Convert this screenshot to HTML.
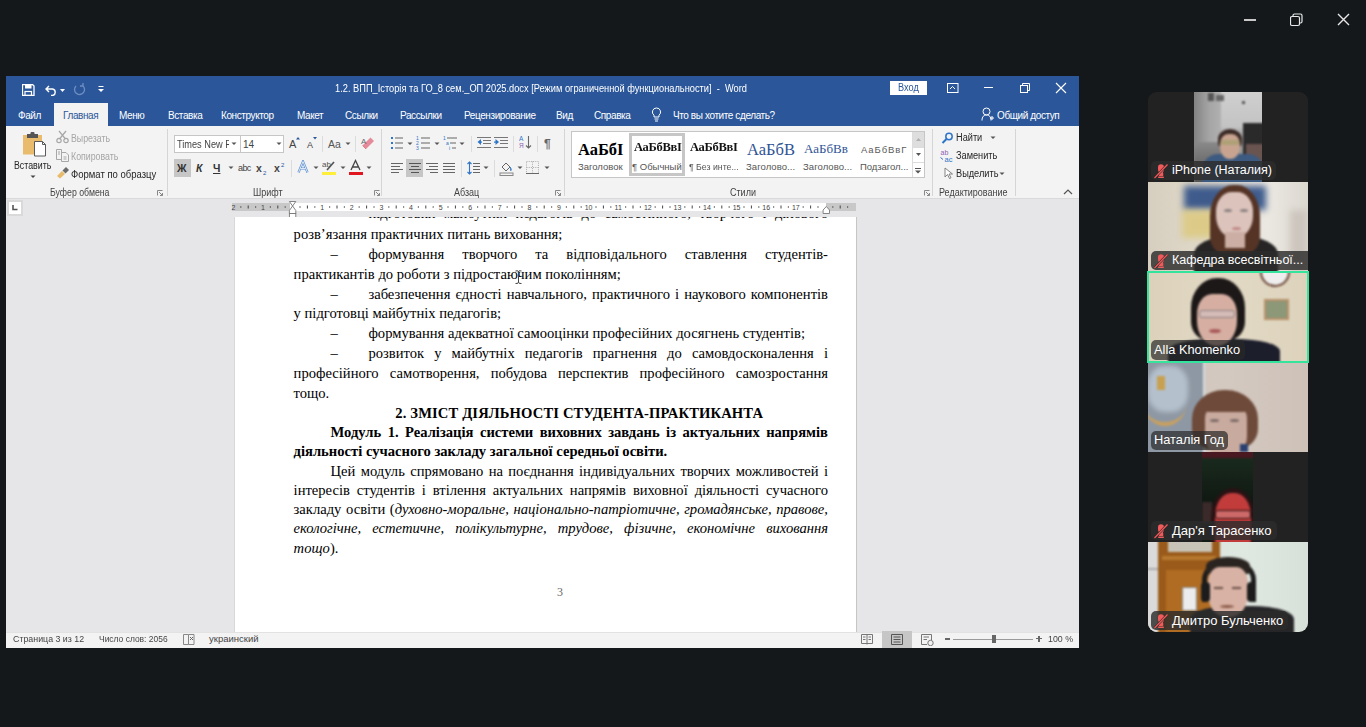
<!DOCTYPE html>
<html><head><meta charset="utf-8">
<style>
*{margin:0;padding:0;box-sizing:border-box}
html,body{width:1366px;height:727px;overflow:hidden;background:#15181b;font-family:"Liberation Sans",sans-serif;position:relative}
.a{position:absolute}
.t{position:absolute;white-space:pre;line-height:1}
.tab{position:absolute;top:111px;font-size:10px;color:#fff;white-space:pre;line-height:1;letter-spacing:-.4px}

.rl{position:absolute;font-size:9.5px;color:#262626;white-space:pre;line-height:1}
.gl{position:absolute;font-size:10px;color:#444;white-space:pre;line-height:1}
.sep{position:absolute;width:1px;background:#d5d5d5}
.ln{position:absolute;left:293.6px;width:534.4px;font-family:"Liberation Serif",serif;font-size:14.6px;line-height:19.6px;height:19.6px;color:#000;white-space:nowrap}
.j{text-align:justify;text-align-last:justify;white-space:normal}
.tile{position:absolute;left:1148px;width:160px;height:90px;background:#232323;overflow:hidden}
.lab{position:absolute;left:3px;bottom:2px;height:19px;background:rgba(28,28,28,.72);border-radius:4px;color:#fff;font-size:12.5px;line-height:19px;padding:0 4px 0 22px;white-space:pre}
.lab.nomic{padding-left:4px}
</style></head><body>
<!-- zoom window controls -->
<svg class="a" style="left:1244px;top:15px" width="14" height="10"><rect x="0" y="4" width="12" height="2" fill="#c8c8c8"/></svg>
<svg class="a" style="left:1290px;top:13px" width="14" height="14"><rect x="0.5" y="3.5" width="9" height="9" rx="1.5" fill="none" stroke="#e8e8e8" stroke-width="1.2"/><path d="M3 3.2V2.5a1.5 1.5 0 0 1 1.5-1.5H10.5A1.5 1.5 0 0 1 12 2.5V8.5A1.5 1.5 0 0 1 10.5 10H10" fill="none" stroke="#e8e8e8" stroke-width="1.2"/></svg>
<svg class="a" style="left:1337px;top:13px" width="14" height="14"><path d="M1 1L12 12M12 1L1 12" stroke="#e8e8e8" stroke-width="1.4"/></svg>

<!-- WORD TITLE -->
<div class="a" style="left:6px;top:76px;width:1073px;height:572px;background:#e6e6e9"></div>
<div class="a" style="left:6px;top:76px;width:1073px;height:50px;background:#2b579a"></div>
<svg class="a" style="left:22px;top:84px" width="13" height="12"><path d="M0.5 0.5H10.5L12 2V11.5H0.5Z" fill="none" stroke="#fff" stroke-width="1.3"/><rect x="3" y="1" width="6.5" height="3.5" fill="#fff"/><rect x="3" y="7.5" width="6.5" height="4" fill="none" stroke="#fff" stroke-width="1.2"/></svg>
<svg class="a" style="left:45px;top:84px" width="28" height="12"><path d="M4 2L1 5L4 8M1.3 5H7.5a3.3 3.3 0 0 1 0 6.5H6" fill="none" stroke="#fff" stroke-width="1.4"/><path d="M15 5H20L17.5 8Z" fill="#fff"/></svg>
<svg class="a" style="left:73px;top:83px" width="13" height="13"><path d="M9.5 2.5A5 5 0 1 1 3 3M10 0V3H7" fill="none" stroke="#6f8fc2" stroke-width="1.3"/></svg>
<svg class="a" style="left:98px;top:86px" width="7" height="8"><rect x="0.5" y="0" width="5" height="1" fill="#fff"/><path d="M0 3H6L3 6Z" fill="#fff"/></svg>
<div class="t" style="left:335px;top:84px;font-size:10px;color:#fff;transform:scaleX(.927);transform-origin:0 0">1.2. ВПП_Історія та ГО_8 сем._ОП 2025.docx [Режим ограниченной функциональности]  -  Word</div>
<div class="a" style="left:890px;top:81px;width:37px;height:14px;background:#fff"></div>
<div class="t" style="left:898px;top:83px;font-size:10px;color:#2b579a;transform:scaleX(.92);transform-origin:0 0">Вход</div>
<svg class="a" style="left:947px;top:83px" width="12" height="11"><rect x="0.5" y="0.5" width="10.5" height="9" fill="none" stroke="#fff"/><path d="M3 6L5.5 3.5L8 6" fill="none" stroke="#fff"/></svg>
<svg class="a" style="left:984px;top:87px" width="10" height="2"><rect x="0" y="0" width="9" height="1" fill="#fff"/></svg>
<svg class="a" style="left:1020px;top:83px" width="11" height="11"><rect x="0.5" y="2.5" width="7" height="7" fill="none" stroke="#fff"/><path d="M2.5 2.5V0.5H9.5V7.5H7.5" fill="none" stroke="#fff"/></svg>
<svg class="a" style="left:1055px;top:82px" width="13" height="13"><path d="M1 1L11 11M11 1L1 11" stroke="#fff" stroke-width="1.1"/></svg>
<!-- tabs -->
<div class="a" style="left:54px;top:103px;width:54px;height:23px;background:#f3f3f3"></div>
<div class="tab" style="left:18px">Файл</div>
<div class="tab" style="left:63px;color:#2b579a">Главная</div>
<div class="tab" style="left:119px">Меню</div>
<div class="tab" style="left:168px">Вставка</div>
<div class="tab" style="left:221px">Конструктор</div>
<div class="tab" style="left:297px">Макет</div>
<div class="tab" style="left:345px">Ссылки</div>
<div class="tab" style="left:400px">Рассылки</div>
<div class="tab" style="left:464px">Рецензирование</div>
<div class="tab" style="left:556px">Вид</div>
<div class="tab" style="left:594px">Справка</div>
<svg class="a" style="left:651px;top:107px" width="11" height="15"><path d="M5.5 1a4 4 0 0 0-2.5 7.2V10h5V8.2A4 4 0 0 0 5.5 1Z" fill="none" stroke="#fff"/><path d="M3.5 12H7.5M4 14H7" stroke="#fff"/></svg>
<div class="tab" style="left:673px">Что вы хотите сделать?</div>
<svg class="a" style="left:981px;top:107px" width="13" height="14"><circle cx="5.5" cy="4.5" r="3.5" fill="none" stroke="#fff"/><path d="M1 13.5C1 9.5 3 8 5.5 8S10 9.5 10 13.5" fill="none" stroke="#fff"/><path d="M9 11H13M11 9V13" stroke="#fff"/></svg>
<div class="tab" style="left:997px">Общий доступ</div>
<!-- RIBBON -->
<div class="a" style="left:6px;top:126px;width:1073px;height:73px;background:#f3f3f3;border-bottom:1px solid #d9d9d9"></div>
<!-- clipboard -->
<svg class="a" style="left:22px;top:131px" width="25" height="26">
 <rect x="1" y="4" width="19" height="19.5" fill="#e9bb6c"/>
 <rect x="5" y="3" width="11" height="4" fill="#555"/><rect x="8.5" y="1" width="4" height="3" rx="1" fill="#555"/>
 <path d="M12.5 10.5H20.5L23.5 13.5V25H12.5Z" fill="#fff" stroke="#5a5a5a" stroke-width="1"/>
 <path d="M20.5 10.5V13.5H23.5" fill="none" stroke="#5a5a5a" stroke-width="1"/>
</svg>
<div class="rl" style="left:14px;top:161px;font-size:10px;transform:scaleX(.88);transform-origin:0 0">Вставить</div>
<svg class="a" style="left:30px;top:175px" width="6" height="4"><path d="M0.5 0.5H5.5L3 3Z" fill="#444"/></svg>
<svg class="a" style="left:56px;top:130px" width="13" height="14"><path d="M3 1L9.5 9M10 1L3.5 9" stroke="#a6a6a6" stroke-width="1.2"/><circle cx="3" cy="10.5" r="2.2" fill="none" stroke="#a6a6a6" stroke-width="1.2"/><circle cx="10" cy="10.5" r="2.2" fill="none" stroke="#a6a6a6" stroke-width="1.2"/></svg>
<div class="rl" style="left:71px;top:134px;font-size:10px;color:#a6a6a6;transform:scaleX(.88);transform-origin:0 0">Вырезать</div>
<svg class="a" style="left:56px;top:149px" width="13" height="13"><path d="M0.5 0.5H5.5V10.5H0.5Z" fill="none" stroke="#a6a6a6"/><path d="M5.5 3.5H10L12.5 6V12.5H5.5Z" fill="#f3f3f3" stroke="#a6a6a6"/><path d="M2 3H4M2 5H4M7.5 8H10.5M7.5 10H10.5" stroke="#a6a6a6"/></svg>
<div class="rl" style="left:71px;top:152px;font-size:10px;color:#a6a6a6;transform:scaleX(.88);transform-origin:0 0">Копировать</div>
<svg class="a" style="left:56px;top:167px" width="14" height="12"><path d="M1 9L6 4L9 7L4 11.5Z" fill="#e9bb6c"/><path d="M6.5 3.5L9.5 6.5L13 3L10 0Z" fill="#6a6a6a"/></svg>
<div class="rl" style="left:71px;top:170px;font-size:10px;color:#262626;transform:scaleX(.95);transform-origin:0 0">Формат по образцу</div>
<div class="gl" style="left:50px;top:188px;transform:scaleX(.875);transform-origin:0 0">Буфер обмена</div>
<svg class="a" style="left:157px;top:190px" width="6" height="6"><path d="M0.5 0.5H5.5M0.5 0.5V5.5" stroke="#888" fill="none"/><path d="M2 2L5.5 5.5M5.5 3V5.5H3" stroke="#888" fill="none"/></svg>
<div class="sep" style="left:167px;top:129px;height:67px"></div>

<!-- font group -->
<div class="a" style="left:174px;top:135px;width:67px;height:18px;background:#fff;border:1px solid #c6c6c6"></div>
<div class="a" style="left:240px;top:135px;width:44px;height:18px;background:#fff;border:1px solid #c6c6c6"></div>
<div class="rl" style="left:177px;top:140px;font-size:10px;color:#444;width:58px;overflow:hidden;transform:scaleX(.92);transform-origin:0 0">Times New R</div>
<div class="a" style="left:229px;top:136px;width:10px;height:16px;background:#fff"></div>
<svg class="a" style="left:231px;top:142px" width="6" height="4"><path d="M0.5 0.5H5.5L3 3Z" fill="#555"/></svg>
<div class="rl" style="left:243px;top:140px;font-size:10px;color:#444">14</div>
<svg class="a" style="left:276px;top:142px" width="6" height="4"><path d="M0.5 0.5H5.5L3 3Z" fill="#555"/></svg>
<div class="rl" style="left:289px;top:139px;font-size:11px;color:#444">A</div>
<svg class="a" style="left:296px;top:137px" width="4" height="3"><path d="M0 2.5L2 0L4 2.5Z" fill="#2b579a"/></svg>
<div class="rl" style="left:307px;top:141px;font-size:9px;color:#444">A</div>
<svg class="a" style="left:313px;top:137px" width="4" height="3"><path d="M0 0L4 0L2 2.5Z" fill="#2b579a"/></svg>
<div class="sep" style="left:322px;top:136px;height:16px;background:#dcdcdc"></div>
<div class="rl" style="left:328px;top:139px;font-size:10.5px;color:#555">Aa</div>
<svg class="a" style="left:345px;top:142px" width="6" height="4"><path d="M0.5 0.5H5.5L3 3Z" fill="#555"/></svg>
<div class="sep" style="left:355px;top:136px;height:16px;background:#dcdcdc"></div>
<svg class="a" style="left:360px;top:136px" width="16" height="14"><path d="M6 13L14 5L10.5 1.5L2.5 9.5Z" fill="#e68a99"/><path d="M2.5 9.5L6 13" stroke="#c44" stroke-width=".5"/><text x="1" y="8" font-size="8" fill="#666" font-family="Liberation Sans">A</text></svg>
<!-- row2 -->
<div class="a" style="left:174px;top:159px;width:17px;height:18px;background:#c6c6c6"></div>
<div class="rl" style="left:177px;top:163px;font-size:10.5px;font-weight:bold;color:#333">Ж</div>
<div class="rl" style="left:196px;top:163px;font-size:10.5px;font-weight:bold;font-style:italic;color:#333">К</div>
<div class="rl" style="left:213px;top:163px;font-size:10.5px;font-weight:bold;color:#333;text-decoration:underline">Ч</div>
<svg class="a" style="left:228px;top:166px" width="6" height="4"><path d="M0.5 0.5H5.5L3 3Z" fill="#555"/></svg>
<div class="rl" style="left:238px;top:164px;font-size:9px;color:#444;letter-spacing:-.6px">abc</div>
<div class="rl" style="left:256px;top:163px;font-size:10.5px;font-weight:bold;color:#444">x</div>
<div class="rl" style="left:263px;top:170px;font-size:6px;color:#2b579a">2</div>
<div class="rl" style="left:274px;top:163px;font-size:10.5px;font-weight:bold;color:#444">x</div>
<div class="rl" style="left:281px;top:162px;font-size:6px;color:#2b579a">2</div>
<div class="sep" style="left:291px;top:160px;height:17px;background:#dcdcdc"></div>
<svg class="a" style="left:297px;top:160px" width="12" height="14"><path d="M1.5 12.5L6 1.5L10.5 12.5M3.5 8.5H8.5" fill="none" stroke="#5b8fd0" stroke-width="2.2"/><path d="M1.5 12.5L6 1.5L10.5 12.5M3.5 8.5H8.5" fill="none" stroke="#fff" stroke-width=".8"/></svg>
<svg class="a" style="left:313px;top:166px" width="6" height="4"><path d="M0.5 0.5H5.5L3 3Z" fill="#555"/></svg>
<svg class="a" style="left:321px;top:159px" width="16" height="18"><text x="1" y="8" font-size="8" fill="#555" font-family="Liberation Sans">ab</text><path d="M6 11L13 3" stroke="#555" stroke-width="1.6"/><rect x="1" y="13" width="14" height="3" fill="#ffef3a"/></svg>
<svg class="a" style="left:340px;top:166px" width="6" height="4"><path d="M0.5 0.5H5.5L3 3Z" fill="#555"/></svg>
<svg class="a" style="left:348px;top:159px" width="16" height="18"><path d="M3 11L7.5 1.5L12 11M4.5 8H10.5" fill="none" stroke="#444" stroke-width="1.3"/><rect x="1" y="13" width="14" height="3" fill="#e0171e"/></svg>
<svg class="a" style="left:366px;top:166px" width="6" height="4"><path d="M0.5 0.5H5.5L3 3Z" fill="#555"/></svg>
<div class="gl" style="left:253px;top:188px;transform:scaleX(.9);transform-origin:0 0">Шрифт</div>
<svg class="a" style="left:374px;top:190px" width="6" height="6"><path d="M0.5 0.5H5.5M0.5 0.5V5.5" stroke="#888" fill="none"/><path d="M2 2L5.5 5.5M5.5 3V5.5H3" stroke="#888" fill="none"/></svg>
<div class="sep" style="left:381px;top:129px;height:67px"></div>

<!-- paragraph group -->
<svg class="a" style="left:390px;top:136px" width="14" height="14"><g fill="#2e75c8"><rect x="1" y="1" width="2" height="2"/><rect x="1" y="6" width="2" height="2"/><rect x="1" y="11" width="2" height="2"/></g><g fill="#666"><rect x="5" y="1.5" width="8" height="1"/><rect x="5" y="6.5" width="8" height="1"/><rect x="5" y="11.5" width="8" height="1"/></g></svg>
<svg class="a" style="left:407px;top:142px" width="6" height="4"><path d="M0.5 0.5H5.5L3 3Z" fill="#555"/></svg>
<svg class="a" style="left:416px;top:136px" width="15" height="14"><g fill="#2e75c8" font-size="5" font-family="Liberation Sans"><text x="0" y="4">1</text><text x="0" y="9">2</text><text x="0" y="14">3</text></g><g fill="#666"><rect x="5" y="1.5" width="9" height="1"/><rect x="5" y="6.5" width="9" height="1"/><rect x="5" y="11.5" width="9" height="1"/></g></svg>
<svg class="a" style="left:434px;top:142px" width="6" height="4"><path d="M0.5 0.5H5.5L3 3Z" fill="#555"/></svg>
<svg class="a" style="left:443px;top:136px" width="15" height="14"><g fill="#2e75c8" font-size="5" font-family="Liberation Sans"><text x="0" y="4">1</text><text x="3" y="9">a</text><text x="6" y="14">i</text></g><g fill="#666"><rect x="4" y="1.5" width="10" height="1"/><rect x="7" y="6.5" width="6" height="1"/><rect x="9" y="11.5" width="4" height="1"/></g></svg>
<svg class="a" style="left:459px;top:142px" width="6" height="4"><path d="M0.5 0.5H5.5L3 3Z" fill="#555"/></svg>
<div class="sep" style="left:471px;top:136px;height:16px;background:#dcdcdc"></div>
<svg class="a" style="left:477px;top:137px" width="14" height="12"><g fill="#777"><rect x="0" y="0" width="14" height="1"/><rect x="6" y="3" width="8" height="1"/><rect x="6" y="6" width="8" height="1"/><rect x="0" y="10" width="14" height="1"/></g><path d="M0.5 5L4 2V8Z" fill="#2e75c8"/><rect x="2" y="4.5" width="3" height="1.2" fill="#2e75c8"/></svg>
<svg class="a" style="left:494px;top:137px" width="14" height="12"><g fill="#777"><rect x="0" y="0" width="14" height="1"/><rect x="6" y="3" width="8" height="1"/><rect x="6" y="6" width="8" height="1"/><rect x="0" y="10" width="14" height="1"/></g><path d="M5 5L1.5 2V8Z" fill="#2e75c8"/><rect x="0" y="4.5" width="3" height="1.2" fill="#2e75c8"/></svg>
<div class="sep" style="left:513px;top:136px;height:16px;background:#dcdcdc"></div>
<svg class="a" style="left:519px;top:135px" width="13" height="15"><text x="0" y="6" font-size="6.5" fill="#2e75c8" font-family="Liberation Sans">A</text><text x="0" y="13" font-size="6.5" fill="#8e5fb5" font-family="Liberation Sans">Я</text><path d="M9.5 1V13M7 10.5L9.5 13L12 10.5" fill="none" stroke="#666" stroke-width="1.1"/></svg>
<div class="sep" style="left:537px;top:136px;height:16px;background:#dcdcdc"></div>
<div class="rl" style="left:544px;top:138px;font-size:12px;color:#666;font-weight:bold">¶</div>
<!-- row2 -->
<svg class="a" style="left:391px;top:163px" width="12" height="10"><g fill="#666"><rect x="0" y="0" width="12" height="1"/><rect x="0" y="3" width="9" height="1"/><rect x="0" y="6" width="12" height="1"/><rect x="0" y="9" width="8" height="1"/></g></svg>
<div class="a" style="left:406px;top:159px;width:17px;height:18px;background:#c6c6c6"></div>
<svg class="a" style="left:409px;top:163px" width="12" height="10"><g fill="#555"><rect x="0" y="0" width="12" height="1"/><rect x="2" y="3" width="8" height="1"/><rect x="0" y="6" width="12" height="1"/><rect x="2" y="9" width="8" height="1"/></g></svg>
<svg class="a" style="left:426px;top:163px" width="12" height="10"><g fill="#666"><rect x="0" y="0" width="12" height="1"/><rect x="3" y="3" width="9" height="1"/><rect x="0" y="6" width="12" height="1"/><rect x="4" y="9" width="8" height="1"/></g></svg>
<svg class="a" style="left:443px;top:163px" width="12" height="10"><g fill="#666"><rect x="0" y="0" width="12" height="1"/><rect x="0" y="3" width="12" height="1"/><rect x="0" y="6" width="12" height="1"/><rect x="0" y="9" width="12" height="1"/></g></svg>
<div class="sep" style="left:461px;top:160px;height:17px;background:#dcdcdc"></div>
<svg class="a" style="left:467px;top:161px" width="13" height="14"><path d="M2.5 1V13M0.5 3L2.5 1L4.5 3M0.5 11L2.5 13L4.5 11" fill="none" stroke="#2e75c8" stroke-width="1.1"/><g fill="#666"><rect x="6" y="2" width="7" height="1"/><rect x="6" y="5" width="7" height="1"/><rect x="6" y="8" width="7" height="1"/><rect x="6" y="11" width="7" height="1"/></g></svg>
<svg class="a" style="left:483px;top:166px" width="6" height="4"><path d="M0.5 0.5H5.5L3 3Z" fill="#555"/></svg>
<div class="sep" style="left:494px;top:160px;height:17px;background:#dcdcdc"></div>
<svg class="a" style="left:499px;top:160px" width="15" height="16"><path d="M3 7L7 3L11 7L7 11Z" fill="none" stroke="#666"/><path d="M11 7C12.5 9 12.5 10 11.5 11" fill="#2e75c8" stroke="#2e75c8"/><rect x="1" y="13" width="13" height="2.5" fill="none" stroke="#888"/></svg>
<svg class="a" style="left:517px;top:166px" width="6" height="4"><path d="M0.5 0.5H5.5L3 3Z" fill="#555"/></svg>
<svg class="a" style="left:526px;top:161px" width="13" height="13"><path d="M0.5 0.5H12.5V12.5H0.5ZM6.5 0.5V12.5M0.5 6.5H12.5" fill="none" stroke="#aaa" stroke-dasharray="1 1.2"/><rect x="0" y="12" width="13" height="1" fill="#666"/></svg>
<svg class="a" style="left:544px;top:166px" width="6" height="4"><path d="M0.5 0.5H5.5L3 3Z" fill="#555"/></svg>
<div class="gl" style="left:454px;top:188px;transform:scaleX(.9);transform-origin:0 0">Абзац</div>
<svg class="a" style="left:555px;top:190px" width="6" height="6"><path d="M0.5 0.5H5.5M0.5 0.5V5.5" stroke="#888" fill="none"/><path d="M2 2L5.5 5.5M5.5 3V5.5H3" stroke="#888" fill="none"/></svg>
<div class="sep" style="left:564px;top:129px;height:67px"></div>

<!-- styles -->
<div class="a" style="left:571px;top:131px;width:354px;height:47px;background:#fff;border:1px solid #c6c6c6"></div>
<div class="a" style="left:629px;top:133px;width:56px;height:43px;border:3px solid #c6c6c6"></div>
<div class="t" style="left:578px;top:141.5px;font-family:'Liberation Serif',serif;font-weight:bold;font-size:16.5px;color:#000">АаБбІ</div>
<div class="t" style="left:578px;top:162px;font-size:9.5px;color:#555">Заголовок</div>
<div class="t" style="left:634px;top:140.5px;font-family:'Liberation Serif',serif;font-weight:bold;font-size:12.5px;color:#000;letter-spacing:-.3px;-webkit-text-stroke:0;opacity:.92">АаБбВвІ</div>
<div class="t" style="left:632px;top:162px;font-size:9.5px;color:#555">¶ Обычный</div>
<div class="t" style="left:690px;top:140.5px;font-family:'Liberation Serif',serif;font-weight:bold;font-size:12.5px;color:#000;letter-spacing:-.3px;opacity:.92">АаБбВвІ</div>
<div class="t" style="left:689px;top:162px;font-size:9.5px;color:#555;transform:scaleX(.92);transform-origin:0 0">¶ Без инте...</div>
<div class="t" style="left:747px;top:141.5px;font-family:'Liberation Serif',serif;font-size:16.5px;color:#2f5496">АаБбВ</div>
<div class="t" style="left:746px;top:162px;font-size:9.5px;color:#555;letter-spacing:.07px">Заголово...</div>
<div class="t" style="left:804px;top:142px;font-family:'Liberation Serif',serif;font-size:13px;color:#2f5496">АаБбВв</div>
<div class="t" style="left:803px;top:162px;font-size:9.5px;color:#555;letter-spacing:.07px">Заголово...</div>
<div class="t" style="left:861px;top:145px;font-size:9.5px;color:#5a5a5a;letter-spacing:.9px">АаБбВвГ</div>
<div class="t" style="left:860px;top:162px;font-size:9.5px;color:#555;letter-spacing:-.05px">Подзагол...</div>
<div class="a" style="left:912px;top:132px;width:12px;height:45px;background:#fff;border-left:1px solid #dcdcdc"></div>
<div class="a" style="left:913px;top:132px;width:11px;height:15px;background:#dedede"></div>
<svg class="a" style="left:916px;top:138px" width="5" height="3"><path d="M0 3L2.5 0L5 3Z" fill="#b0b0b0"/></svg>
<div class="a" style="left:913px;top:147px;width:11px;height:1px;background:#dcdcdc"></div>
<svg class="a" style="left:916px;top:153px" width="5" height="3"><path d="M0 0L5 0L2.5 3Z" fill="#555"/></svg>
<div class="a" style="left:913px;top:162px;width:11px;height:1px;background:#dcdcdc"></div>
<svg class="a" style="left:915px;top:168px" width="6" height="6"><rect x="0" y="0" width="6" height="1" fill="#555"/><path d="M0 2.5H6L3 5.5Z" fill="#555"/></svg>
<div class="gl" style="left:730px;top:188px;transform:scaleX(.9);transform-origin:0 0">Стили</div>
<svg class="a" style="left:924px;top:190px" width="6" height="6"><path d="M0.5 0.5H5.5M0.5 0.5V5.5" stroke="#888" fill="none"/><path d="M2 2L5.5 5.5M5.5 3V5.5H3" stroke="#888" fill="none"/></svg>
<div class="sep" style="left:932px;top:129px;height:67px"></div>

<!-- editing -->
<svg class="a" style="left:941px;top:132px" width="13" height="12"><circle cx="8" cy="4.5" r="3.2" fill="none" stroke="#2e75c8" stroke-width="1.5"/><path d="M5.5 7L1.5 11" stroke="#2e75c8" stroke-width="2"/></svg>
<div class="rl" style="left:956px;top:133px;font-size:10px;color:#262626;transform:scaleX(.92);transform-origin:0 0">Найти</div>
<svg class="a" style="left:990px;top:136px" width="6" height="4"><path d="M0.5 0.5H5.5L3 3Z" fill="#555"/></svg>
<svg class="a" style="left:940px;top:149px" width="15" height="13"><text x="0.5" y="6" font-size="7" fill="#8e5fb5" font-family="Liberation Sans">ab</text><text x="4.5" y="12.5" font-size="7.5" fill="#2e75c8" font-family="Liberation Sans">ac</text><path d="M0.5 8.5L3 10.5" stroke="#2e75c8"/></svg>
<div class="rl" style="left:956px;top:151px;font-size:10px;color:#262626;transform:scaleX(.92);transform-origin:0 0">Заменить</div>
<svg class="a" style="left:944px;top:167px" width="10" height="12"><path d="M1 1V10L3.5 7.5L5.5 11.5L7 10.8L5 7H8.5Z" fill="#fff" stroke="#777" stroke-width=".9"/></svg>
<div class="rl" style="left:956px;top:169px;font-size:10px;color:#262626;transform:scaleX(.92);transform-origin:0 0">Выделить</div>
<svg class="a" style="left:999px;top:172px" width="6" height="4"><path d="M0.5 0.5H5.5L3 3Z" fill="#555"/></svg>
<div class="gl" style="left:939px;top:188px;transform:scaleX(.9);transform-origin:0 0">Редактирование</div>
<div class="sep" style="left:1015px;top:129px;height:67px"></div>
<svg class="a" style="left:1063px;top:189px" width="10" height="6"><path d="M1 5L5 1L9 5" fill="none" stroke="#555" stroke-width="1.2"/></svg>
<!-- RULER -->
<div class="a" style="left:7px;top:200px;width:16px;height:16px;background:#d9d9d9"></div>
<div class="a" style="left:9px;top:202px;width:12px;height:12px;background:#fff"></div>
<svg class="a" style="left:12px;top:205px" width="6" height="6"><path d="M1 0V4.5H5.5" fill="none" stroke="#555" stroke-width="1.6"/></svg>
<div class="a" style="left:232px;top:203px;width:624px;height:8px;background:#c8c8c9"></div>
<div class="a" style="left:290px;top:203px;width:536px;height:8px;background:#fff"></div>
<svg class="a" style="left:228px;top:201px" width="632" height="17"><text x="5.4" y="9.3" font-size="7" fill="#444" text-anchor="middle" font-family="Liberation Sans">2</text><rect x="12.2" y="5.4" width="1.2" height="1.2" fill="#444"/><rect x="19.7" y="4.5" width="1" height="3" fill="#444"/><rect x="27.0" y="5.4" width="1.2" height="1.2" fill="#444"/><text x="35.0" y="9.3" font-size="7" fill="#444" text-anchor="middle" font-family="Liberation Sans">1</text><rect x="41.8" y="5.4" width="1.2" height="1.2" fill="#444"/><rect x="49.3" y="4.5" width="1" height="3" fill="#444"/><rect x="56.6" y="5.4" width="1.2" height="1.2" fill="#444"/><rect x="71.4" y="5.4" width="1.2" height="1.2" fill="#444"/><rect x="78.9" y="4.5" width="1" height="3" fill="#444"/><rect x="86.2" y="5.4" width="1.2" height="1.2" fill="#444"/><text x="94.2" y="9.3" font-size="7" fill="#444" text-anchor="middle" font-family="Liberation Sans">1</text><rect x="101.0" y="5.4" width="1.2" height="1.2" fill="#444"/><rect x="108.5" y="4.5" width="1" height="3" fill="#444"/><rect x="115.8" y="5.4" width="1.2" height="1.2" fill="#444"/><text x="123.8" y="9.3" font-size="7" fill="#444" text-anchor="middle" font-family="Liberation Sans">2</text><rect x="130.6" y="5.4" width="1.2" height="1.2" fill="#444"/><rect x="138.1" y="4.5" width="1" height="3" fill="#444"/><rect x="145.4" y="5.4" width="1.2" height="1.2" fill="#444"/><text x="153.4" y="9.3" font-size="7" fill="#444" text-anchor="middle" font-family="Liberation Sans">3</text><rect x="160.2" y="5.4" width="1.2" height="1.2" fill="#444"/><rect x="167.7" y="4.5" width="1" height="3" fill="#444"/><rect x="175.0" y="5.4" width="1.2" height="1.2" fill="#444"/><text x="183.0" y="9.3" font-size="7" fill="#444" text-anchor="middle" font-family="Liberation Sans">4</text><rect x="189.8" y="5.4" width="1.2" height="1.2" fill="#444"/><rect x="197.3" y="4.5" width="1" height="3" fill="#444"/><rect x="204.6" y="5.4" width="1.2" height="1.2" fill="#444"/><text x="212.6" y="9.3" font-size="7" fill="#444" text-anchor="middle" font-family="Liberation Sans">5</text><rect x="219.4" y="5.4" width="1.2" height="1.2" fill="#444"/><rect x="226.9" y="4.5" width="1" height="3" fill="#444"/><rect x="234.2" y="5.4" width="1.2" height="1.2" fill="#444"/><text x="242.2" y="9.3" font-size="7" fill="#444" text-anchor="middle" font-family="Liberation Sans">6</text><rect x="249.0" y="5.4" width="1.2" height="1.2" fill="#444"/><rect x="256.5" y="4.5" width="1" height="3" fill="#444"/><rect x="263.8" y="5.4" width="1.2" height="1.2" fill="#444"/><text x="271.8" y="9.3" font-size="7" fill="#444" text-anchor="middle" font-family="Liberation Sans">7</text><rect x="278.6" y="5.4" width="1.2" height="1.2" fill="#444"/><rect x="286.1" y="4.5" width="1" height="3" fill="#444"/><rect x="293.4" y="5.4" width="1.2" height="1.2" fill="#444"/><text x="301.4" y="9.3" font-size="7" fill="#444" text-anchor="middle" font-family="Liberation Sans">8</text><rect x="308.2" y="5.4" width="1.2" height="1.2" fill="#444"/><rect x="315.7" y="4.5" width="1" height="3" fill="#444"/><rect x="323.0" y="5.4" width="1.2" height="1.2" fill="#444"/><text x="331.0" y="9.3" font-size="7" fill="#444" text-anchor="middle" font-family="Liberation Sans">9</text><rect x="337.8" y="5.4" width="1.2" height="1.2" fill="#444"/><rect x="345.3" y="4.5" width="1" height="3" fill="#444"/><rect x="352.6" y="5.4" width="1.2" height="1.2" fill="#444"/><text x="360.6" y="9.3" font-size="7" fill="#444" text-anchor="middle" font-family="Liberation Sans">10</text><rect x="367.4" y="5.4" width="1.2" height="1.2" fill="#444"/><rect x="374.9" y="4.5" width="1" height="3" fill="#444"/><rect x="382.2" y="5.4" width="1.2" height="1.2" fill="#444"/><text x="390.2" y="9.3" font-size="7" fill="#444" text-anchor="middle" font-family="Liberation Sans">11</text><rect x="397.0" y="5.4" width="1.2" height="1.2" fill="#444"/><rect x="404.5" y="4.5" width="1" height="3" fill="#444"/><rect x="411.8" y="5.4" width="1.2" height="1.2" fill="#444"/><text x="419.8" y="9.3" font-size="7" fill="#444" text-anchor="middle" font-family="Liberation Sans">12</text><rect x="426.6" y="5.4" width="1.2" height="1.2" fill="#444"/><rect x="434.1" y="4.5" width="1" height="3" fill="#444"/><rect x="441.4" y="5.4" width="1.2" height="1.2" fill="#444"/><text x="449.4" y="9.3" font-size="7" fill="#444" text-anchor="middle" font-family="Liberation Sans">13</text><rect x="456.2" y="5.4" width="1.2" height="1.2" fill="#444"/><rect x="463.7" y="4.5" width="1" height="3" fill="#444"/><rect x="471.0" y="5.4" width="1.2" height="1.2" fill="#444"/><text x="479.0" y="9.3" font-size="7" fill="#444" text-anchor="middle" font-family="Liberation Sans">14</text><rect x="485.8" y="5.4" width="1.2" height="1.2" fill="#444"/><rect x="493.3" y="4.5" width="1" height="3" fill="#444"/><rect x="500.6" y="5.4" width="1.2" height="1.2" fill="#444"/><text x="508.6" y="9.3" font-size="7" fill="#444" text-anchor="middle" font-family="Liberation Sans">15</text><rect x="515.4" y="5.4" width="1.2" height="1.2" fill="#444"/><rect x="522.9" y="4.5" width="1" height="3" fill="#444"/><rect x="530.2" y="5.4" width="1.2" height="1.2" fill="#444"/><text x="538.2" y="9.3" font-size="7" fill="#444" text-anchor="middle" font-family="Liberation Sans">16</text><rect x="545.0" y="5.4" width="1.2" height="1.2" fill="#444"/><rect x="552.5" y="4.5" width="1" height="3" fill="#444"/><rect x="559.8" y="5.4" width="1.2" height="1.2" fill="#444"/><text x="567.8" y="9.3" font-size="7" fill="#444" text-anchor="middle" font-family="Liberation Sans">17</text><rect x="574.6" y="5.4" width="1.2" height="1.2" fill="#444"/><rect x="582.1" y="4.5" width="1" height="3" fill="#444"/><rect x="589.4" y="5.4" width="1.2" height="1.2" fill="#444"/><rect x="604.2" y="5.4" width="1.2" height="1.2" fill="#444"/><rect x="611.7" y="4.5" width="1" height="3" fill="#444"/><rect x="619.0" y="5.4" width="1.2" height="1.2" fill="#444"/><path d="M61.4 0.5H67.8L64.6 5L67.8 9.5V12.5H61.4V9.5L64.6 5Z" fill="#fff" stroke="#777" stroke-width=".9"/><rect x="61.4" y="12.5" width="6.4" height="4" fill="#fff" stroke="#777" stroke-width=".9"/><path d="M595.1 12.5V9L598.3 5.5L601.5 9V12.5Z" fill="#fff" stroke="#777" stroke-width=".9"/></svg>
<!-- DOC -->
<div class="a" style="left:234px;top:217px;width:1px;height:415px;background:#d8d8d8"></div><div class="a" style="left:235px;top:217px;width:622px;height:415px;background:#fff;border-right:1px solid #c6c6c6"></div>
<div class="a" style="left:235px;top:217px;width:621px;height:415px;overflow:hidden">
<div class="ln" style="left:95.5px;top:-12.60px;width:20px">–</div>
<div class="ln j" style="left:133.4px;top:-12.60px;width:459.6px;">підготовки майбутніх педагогів до самостійного, творчого і ділового</div>
<div class="ln " style="left:58.6px;top:7.80px;width:500.0px;">розв’язання практичних питань виховання;</div>
<div class="ln" style="left:95.5px;top:27.70px;width:20px">–</div>
<div class="ln j" style="left:133.4px;top:27.70px;width:459.6px;">формування творчого та відповідального ставлення студентів-</div>
<div class="ln " style="left:58.6px;top:47.60px;width:500.0px;">практикантів до роботи з підростаючим поколінням;</div>
<div class="ln" style="left:95.5px;top:67.50px;width:20px">–</div>
<div class="ln j" style="left:133.4px;top:67.50px;width:459.6px;">забезпечення єдності навчального, практичного і наукового компонентів</div>
<div class="ln " style="left:58.6px;top:87.20px;width:500.0px;">у підготовці майбутніх педагогів;</div>
<div class="ln" style="left:95.5px;top:107.00px;width:20px">–</div>
<div class="ln " style="left:133.4px;top:107.00px;width:459.6px;">формування адекватної самооцінки професійних досягнень студентів;</div>
<div class="ln" style="left:95.5px;top:127.00px;width:20px">–</div>
<div class="ln j" style="left:133.4px;top:127.00px;width:459.6px;">розвиток у майбутніх педагогів прагнення до самовдосконалення і</div>
<div class="ln j" style="left:58.6px;top:147.00px;width:534.4px;">професійного самотворення, побудова перспектив професійного самозростання</div>
<div class="ln " style="left:58.6px;top:166.60px;width:500.0px;">тощо.</div>
<div class="ln " style="left:95.5px;top:186.50px;width:497.5px;text-align:center;font-weight:bold;letter-spacing:.13px">2. ЗМІСТ ДІЯЛЬНОСТІ СТУДЕНТА-ПРАКТИКАНТА</div>
<div class="ln j" style="left:95.5px;top:206.30px;width:497.5px;font-weight:bold">Модуль 1. Реалізація системи виховних завдань із актуальних напрямів</div>
<div class="ln " style="left:58.6px;top:225.00px;width:500.0px;font-weight:bold">діяльності сучасного закладу загальної середньої освіти.</div>
<div class="ln j" style="left:95.5px;top:244.50px;width:497.5px;">Цей модуль спрямовано на поєднання індивідуальних творчих можливостей і</div>
<div class="ln j" style="left:58.6px;top:263.50px;width:534.4px;">інтересів студентів і втілення актуальних напрямів виховної діяльності сучасного</div>
<div class="ln j" style="left:58.6px;top:283.00px;width:534.4px;">закладу освіти (<i>духовно-моральне, національно-патріотичне, громадянське, правове,</i></div>
<div class="ln j" style="left:58.6px;top:302.40px;width:534.4px;"><i>екологічне, естетичне, полікультурне, трудове, фізичне, економічне виховання</i></div>
<div class="ln " style="left:58.6px;top:321.70px;width:500.0px;"><i>тощо</i>).</div>
<div class="t" style="left:322px;top:369px;font-family:'Liberation Serif',serif;font-size:12px;color:#6a6a6a">3</div>
</div>
<svg class="a" style="left:515px;top:270px" width="7" height="15"><path d="M0.5 1Q3.5 0 3.5 2V12Q3.5 14 0.5 13.5M6.5 1Q3.5 0 3.5 2M3.5 12Q3.5 14 6.5 13.5" fill="none" stroke="#444" stroke-width="1"/></svg>
<!-- STATUS -->
<div class="a" style="left:6px;top:632px;width:1073px;height:16px;background:#f3f3f3;border-top:1px solid #e2e2e2"></div>
<div class="t" style="left:13px;top:634px;font-size:9.5px;color:#444;transform:scaleX(.93);transform-origin:0 0">Страница 3 из 12</div>
<div class="t" style="left:99px;top:634px;font-size:9.5px;color:#444;transform:scaleX(.89);transform-origin:0 0">Число слов: 2056</div>
<svg class="a" style="left:183px;top:634px" width="12" height="11"><path d="M0.5 0.5H5.5V10.5H0.5Z" fill="none" stroke="#888"/><path d="M5.5 0.5H11V10.5H5.5" fill="none" stroke="#888"/><path d="M7 3L10 6M10 3L7 6" stroke="#666"/></svg>
<div class="t" style="left:209px;top:634px;font-size:9.5px;color:#444;transform:scaleX(1.0);transform-origin:0 0">украинский</div>
<svg class="a" style="left:861px;top:634px" width="12" height="11"><path d="M0.5 0.5H11.5V9.5H0.5ZM6 0.5V10.5M2 3H4.5M2 5.5H4.5M7.5 3H10M7.5 5.5H10" fill="none" stroke="#777"/></svg>
<div class="a" style="left:882px;top:631px;width:30px;height:17px;background:#c6c6c6"></div>
<svg class="a" style="left:891px;top:634px" width="12" height="11"><path d="M0.5 0.5H11.5V10.5H0.5ZM2.5 3H9.5M2.5 5.5H9.5M2.5 8H9.5" fill="none" stroke="#555"/></svg>
<svg class="a" style="left:921px;top:634px" width="13" height="12"><path d="M0.5 0.5H10.5V6M0.5 0.5V10.5H6M2.5 3H8M2.5 5.5H6" fill="none" stroke="#777"/><circle cx="9.5" cy="9" r="2.7" fill="none" stroke="#777"/></svg>
<div class="a" style="left:945px;top:638px;width:5px;height:1.5px;background:#666"></div>
<div class="a" style="left:953px;top:638.5px;width:80px;height:1px;background:#9a9a9a"></div>
<div class="a" style="left:992px;top:635px;width:4px;height:8px;background:#666"></div>
<div class="a" style="left:1036px;top:638px;width:6px;height:1.2px;background:#666"></div>
<div class="a" style="left:1038.4px;top:635.6px;width:1.2px;height:6px;background:#666"></div>
<div class="t" style="left:1048px;top:634px;font-size:9.5px;color:#444;transform:scaleX(.93);transform-origin:0 0">100 %</div>
<!-- ZOOM PANEL -->
<style>
.v{position:absolute;overflow:hidden}
.b{position:absolute}
.mic{position:absolute;left:2px;top:2px}
</style>
<div class="a" style="left:1148px;top:92px;width:160px;height:540px;border-radius:9px;overflow:hidden;background:#222">
 <!-- tile1 -->
 <div class="v" style="left:0;top:0;width:160px;height:90px;background:#222">
  <div class="v" style="left:46px;top:0;width:68px;height:90px;background:#b0b0b0">
   <div style="position:absolute;left:0;top:0;width:68px;height:90px;filter:blur(1.2px)">
   <div class="b" style="left:-2px;top:-2px;width:30px;height:94px;background:linear-gradient(90deg,#7e7e7e,#a4a4a4 55%,#b2b2b2)"></div>
   <div class="b" style="left:27px;top:-2px;width:44px;height:40px;background:linear-gradient(180deg,#d0d0d0,#c2c2c2)"></div>
   <div class="b" style="left:27px;top:36px;width:44px;height:30px;background:linear-gradient(180deg,#b8b8b8,#8c8c8c)"></div>
   <div class="b" style="left:0;top:50px;width:30px;height:42px;background:linear-gradient(180deg,#8a8a8a,#505050)"></div>
   <div class="b" style="left:49px;top:31px;width:22px;height:38px;background:#2a2a2a"></div>
   <div class="b" style="left:52px;top:52px;width:18px;height:18px;background:#6a5450"></div>
   <div class="b" style="left:14px;top:1px;width:6px;height:8px;background:#555"></div>
   <div class="b" style="left:22px;top:3px;width:8px;height:6px;background:#666"></div>
   <div class="b" style="left:48px;top:9px;width:3px;height:3px;background:#333;border-radius:50%"></div>
   <div class="b" style="left:8px;top:62px;width:62px;height:32px;background:#3d5a80;border-radius:16px 16px 0 0"></div>
   <div class="b" style="left:24px;top:37px;width:24px;height:20px;background:#3a2a26;border-radius:50% 50% 30% 30%"></div>
   <div class="b" style="left:26px;top:42px;width:20px;height:25px;background:#c8a490;border-radius:40% 40% 48% 48%"></div>
   <div class="b" style="left:27px;top:48px;width:18px;height:5px;background:#a8a070;opacity:.8"></div>
   </div>
  </div>
 </div>
 <!-- tile2 -->
 <div class="v" style="left:0;top:90px;width:160px;height:90px;background:linear-gradient(90deg,#d6cebe,#e2dbcc 40%,#ebe8e2 75%,#dcd8d0)">
  <div style="position:absolute;left:0;top:0;width:160px;height:90px;filter:blur(1.2px)">
  <div class="b" style="left:36px;top:4px;width:82px;height:24px;background:#3e5b8c;filter:blur(3px)"></div>
  <div class="b" style="left:34px;top:28px;width:70px;height:28px;background:#dccb88;filter:blur(3px)"></div>
  <div class="b" style="left:142px;top:28px;width:18px;height:62px;background:#cdc6be;filter:blur(3px)"></div>
  <div class="b" style="left:46px;top:54px;width:84px;height:40px;background:#262424;border-radius:45% 45% 0 0"></div>
  <div class="b" style="left:62px;top:3px;width:50px;height:68px;background:#553426;border-radius:46% 46% 25% 25%"></div>
  <div class="b" style="left:68px;top:10px;width:37px;height:46px;background:#dcc4bc;border-radius:42% 42% 48% 48%"></div>
  <div class="b" style="left:77px;top:50px;width:20px;height:16px;background:#ccaea4"></div>
  <div class="b" style="left:76px;top:27px;width:8px;height:3px;background:#8a8080;border-radius:50%"></div>
  <div class="b" style="left:92px;top:27px;width:8px;height:3px;background:#8a8080;border-radius:50%"></div>
  <div class="b" style="left:84px;top:45px;width:9px;height:3px;background:#c08888;border-radius:50%"></div>
  </div>
 </div>
 <!-- tile3 -->
 <div class="v" style="left:0;top:180px;width:160px;height:90px;background:linear-gradient(90deg,#dcd2bc,#e2d9c4 50%,#ddd3bd)">
  <div style="position:absolute;left:0;top:0;width:160px;height:90px;filter:blur(1px)">
  <div class="b" style="left:112px;top:-4px;width:30px;height:19px;background:#eeeeee;border:2px solid #6a4434;border-radius:0 0 15px 15px"></div>
  <div class="b" style="left:116px;top:27px;width:25px;height:21px;background:#8c9878;border:2px solid #b89068"></div>
  <div class="b" style="left:20px;top:67px;width:112px;height:30px;background:#1c1e2c;border-radius:40% 40% 0 0"></div>
  <div class="b" style="left:43px;top:6px;width:54px;height:62px;background:#1c1818;border-radius:48% 48% 30% 30%"></div>
  <div class="b" style="left:49px;top:22px;width:40px;height:52px;background:#d6afa2;border-radius:38% 38% 48% 48%"></div>
  <div class="b" style="left:51px;top:38px;width:36px;height:8px;border:1px solid #8a8080;border-radius:3px;background:rgba(210,210,225,.35)"></div>
  <div class="b" style="left:61px;top:57px;width:12px;height:4px;background:#a85858;border-radius:50%"></div>
  </div>
 </div>
 <!-- tile4 -->
 <div class="v" style="left:0;top:270px;width:160px;height:90px;background:linear-gradient(90deg,#cfc3ba,#d4c9c0 50%,#cdc1b8)">
  <div style="position:absolute;left:0;top:0;width:160px;height:90px;filter:blur(1px)">
  <div class="b" style="left:-2px;top:-2px;width:58px;height:94px;background:#8e98a4"></div>
  <div class="b" style="left:55px;top:-2px;width:2px;height:94px;background:#d8dce0"></div>
  <div class="b" style="left:0;top:4px;width:40px;height:46px;background:#b4c0cc;filter:blur(2px);border-radius:40%"></div>
  <div class="b" style="left:9px;top:14px;width:8px;height:14px;background:#c8a050"></div>
  <div class="b" style="left:-4px;top:40px;width:42px;height:24px;border-bottom:4px solid #c8a060;border-radius:0 0 30px 30px"></div>
  <div class="b" style="left:44px;top:28px;width:66px;height:60px;background:#6e4a3a;border-radius:48% 48% 35% 35%"></div>
  <div class="b" style="left:57px;top:44px;width:42px;height:50px;background:#c9aa9e;border-radius:25% 25% 40% 40%"></div>
  <div class="b" style="left:58px;top:40px;width:40px;height:10px;background:#6e4a3a;border-radius:40% 40% 10% 10%"></div>
  <div class="b" style="left:62px;top:57px;width:9px;height:3px;background:#7a6a68;border-radius:50%"></div>
  <div class="b" style="left:82px;top:57px;width:9px;height:3px;background:#7a6a68;border-radius:50%"></div>
  <div class="b" style="left:92px;top:82px;width:8px;height:8px;background:#2a4070"></div>
  </div>
 </div>
 <!-- tile5 -->
 <div class="v" style="left:0;top:360px;width:160px;height:90px;background:#222">
  <div class="v" style="left:54px;top:0;width:51px;height:90px;background:#121a14">
   <div style="position:absolute;left:0;top:0;width:51px;height:90px;filter:blur(1px)">
   <div class="b" style="left:-2px;top:-2px;width:55px;height:8px;background:#4a1820"></div>
   <div class="b" style="left:-2px;top:6px;width:55px;height:50px;background:linear-gradient(180deg,#1a2a1e,#0e1610)"></div>
   <div class="b" style="left:0px;top:50px;width:10px;height:22px;background:#3a2a2a"></div>
   <div class="b" style="left:9px;top:36px;width:44px;height:58px;background:#2a1214;border-radius:50% 50% 0 0"></div>
   <div class="b" style="left:13px;top:41px;width:36px;height:52px;background:#c23c3c;border-radius:45% 45% 10% 10%"></div>
   <div class="b" style="left:13px;top:58px;width:36px;height:9px;border:1.5px solid #2a1010;border-radius:3px;background:rgba(230,190,190,.35)"></div>
   </div>
  </div>
 </div>
 <!-- tile6 -->
 <div class="v" style="left:0;top:450px;width:160px;height:90px;background:linear-gradient(90deg,#d4ddd6,#e0e8e2 60%,#d8e0da)">
  <div style="position:absolute;left:0;top:0;width:160px;height:90px;filter:blur(1px)">
  <div class="b" style="left:-2px;top:-2px;width:22px;height:94px;background:#dadada"></div>
  <div class="b" style="left:-2px;top:26px;width:22px;height:2px;background:#aaa"></div>
  <div class="b" style="left:10px;top:-2px;width:62px;height:94px;background:#9a5a1a"></div>
  <div class="b" style="left:20px;top:-2px;width:44px;height:12px;background:#c8c4b8"></div>
  <div class="b" style="left:14px;top:14px;width:54px;height:4px;background:#b87a30"></div>
  <div class="b" style="left:18px;top:28px;width:46px;height:64px;background:#b06c22"></div>
  <div class="b" style="left:34px;top:45px;width:15px;height:24px;background:#ececec;border:1px solid #8a8a8a"></div>
  <div class="b" style="left:42px;top:64px;width:104px;height:32px;background:#262628;border-radius:40% 40% 0 0"></div>
  <div class="b" style="left:54px;top:16px;width:54px;height:44px;border:5px solid #1c1c1c;border-bottom:none;border-radius:50% 50% 0 0"></div>
  <div class="b" style="left:58px;top:15px;width:44px;height:18px;background:#2a2420;border-radius:50% 50% 20% 20%"></div>
  <div class="b" style="left:60px;top:25px;width:40px;height:50px;background:#d8b2a4;border-radius:30% 30% 45% 45%"></div>
  <div class="b" style="left:53px;top:40px;width:9px;height:20px;background:#1c1c1c;border-radius:4px"></div>
  <div class="b" style="left:99px;top:40px;width:9px;height:20px;background:#1c1c1c;border-radius:4px"></div>
  <div class="b" style="left:72px;top:63px;width:14px;height:3px;background:#8a5a4a;border-radius:50%"></div>
  <div class="b" style="left:66px;top:45px;width:9px;height:2px;background:#6a5048"></div>
  <div class="b" style="left:84px;top:45px;width:9px;height:2px;background:#6a5048"></div>
  </div>
 </div>
</div>
<!-- active speaker border -->
<div class="a" style="left:1147px;top:271px;width:162px;height:92px;border:2px solid #34e39c"></div>

<!-- labels -->
<svg width="0" height="0" style="position:absolute"><defs><g id="micx"><path d="M5 4.5a3 3.2 0 0 1 6 0V6.5C11 8 10 9 9.8 9.5C10.5 10.5 10.5 12 10 13H6C5.5 12 5.5 10.5 6.2 9.5C6 9 5 8 5 6.5Z" fill="#f05a5a"/><rect x="5" y="13.5" width="6" height="1.4" rx=".7" fill="#f05a5a"/><path d="M1.5 15L14.5 1.5" stroke="#262626" stroke-width="2.4"/><path d="M1.5 15L14.5 1.5" stroke="#f05a5a" stroke-width="1.3"/></g></defs></svg>
<div class="a" style="left:1151px;top:161px;width:125px;height:19px;background:rgba(44,44,44,.82);border-radius:5px"></div>
<svg class="a" style="left:1153px;top:163px" width="16" height="16"><use href="#micx"/></svg>
<div class="t" style="left:1172px;top:164px;font-size:12.5px;color:#fff">iPhone (Наталия)</div>

<div class="a" style="left:1151px;top:251px;width:157px;height:19px;background:rgba(44,44,44,.82);border-radius:5px 0 0 5px"></div>
<svg class="a" style="left:1153px;top:253px" width="16" height="16"><use href="#micx"/></svg>
<div class="t" style="left:1172px;top:254px;font-size:12.5px;color:#fff">Кафедра всесвітньої...</div>

<div class="a" style="left:1151px;top:340px;width:94px;height:20px;background:rgba(40,40,40,.7);border-radius:5px"></div>
<div class="t" style="left:1154px;top:344px;font-size:12.8px;color:#fff">Alla Khomenko</div>

<div class="a" style="left:1151px;top:431px;width:77px;height:19px;background:rgba(40,40,40,.7);border-radius:5px"></div>
<div class="t" style="left:1154px;top:434px;font-size:12.8px;color:#fff">Наталія Год</div>

<div class="a" style="left:1151px;top:521px;width:126px;height:19px;background:rgba(44,44,44,.82);border-radius:5px"></div>
<svg class="a" style="left:1153px;top:523px" width="16" height="16"><use href="#micx"/></svg>
<div class="t" style="left:1172px;top:524px;font-size:13px;color:#fff">Дар'я Тарасенко</div>

<div class="a" style="left:1151px;top:611px;width:137px;height:19px;background:rgba(44,44,44,.82);border-radius:5px"></div>
<svg class="a" style="left:1153px;top:613px" width="16" height="16"><use href="#micx"/></svg>
<div class="t" style="left:1172px;top:614px;font-size:13px;color:#fff">Дмитро Бульченко</div>
</body></html>
